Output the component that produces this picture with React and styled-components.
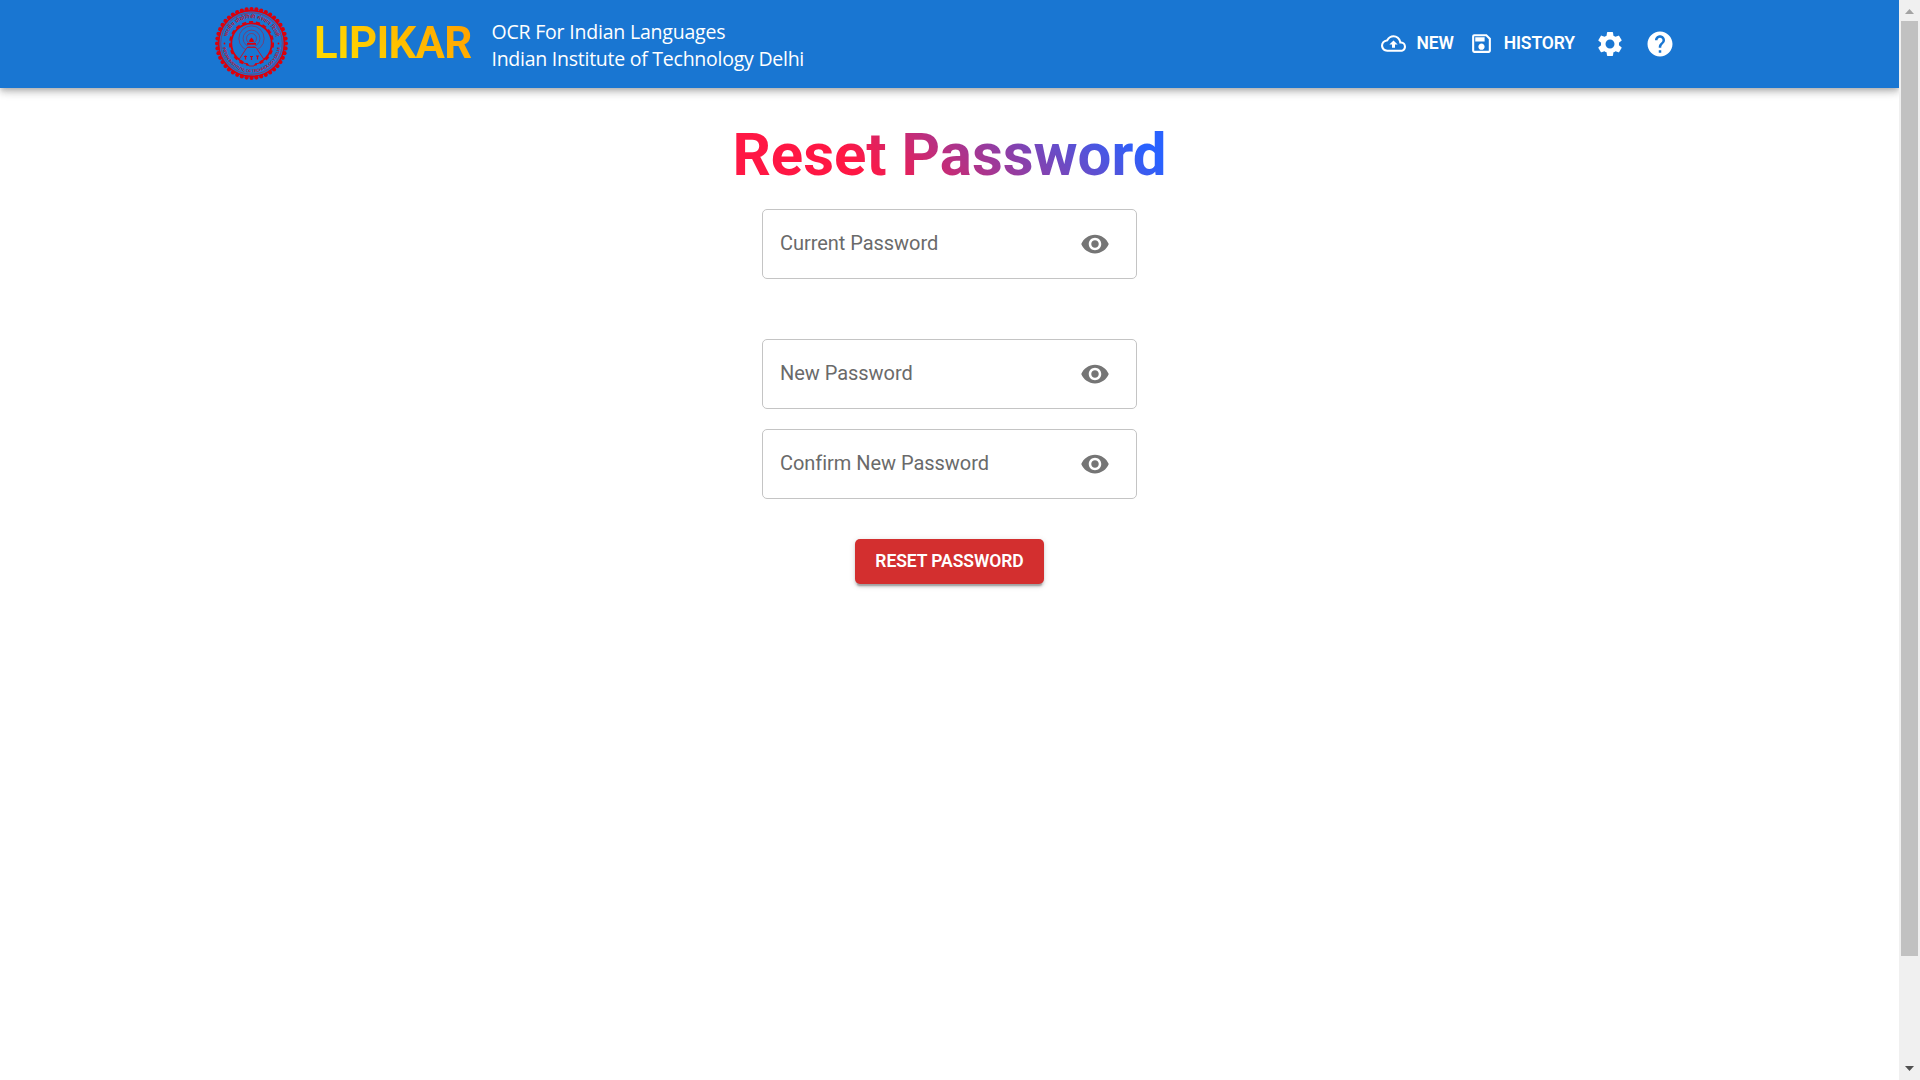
import React from "react";
import styled, { createGlobalStyle, css } from "styled-components";
import { MdOutlineBackup, MdOutlineSave, MdSettings, MdHelp, MdVisibility } from "react-icons/md";

const GlobalStyle = createGlobalStyle`
  * { box-sizing: border-box; }
  html, body { margin: 0; background: #fff; overflow: hidden; }
  body { font-family: Roboto, sans-serif; }
`;

const Screen = styled.div`
  display: flex;
  width: 100vw;
  height: 100vh;
  overflow: hidden;
`;

const Page = styled.div`
  flex: 1;
  display: flex;
  flex-direction: column;
  min-width: 0;
  overflow: hidden;
`;

const Header = styled.header`
  display: flex;
  align-items: center;
  height: 88px;
  flex-shrink: 0;
  padding: 0 224px 0 214px;
  background: #1976d2;
  color: #fff;
  box-shadow: 0 2.5px 5px -1.25px rgba(0, 0, 0, 0.2), 0 5px 6.25px rgba(0, 0, 0, 0.14),
    0 1.25px 12.5px rgba(0, 0, 0, 0.12);
`;

const Emblem = styled.svg`
  width: 75px;
  height: 75px;
  flex-shrink: 0;
  margin-bottom: 1px;
`;

const Brand = styled.div`
  margin-left: 25px;
  font-size: 43.75px;
  line-height: 54px;
  font-weight: 700;
  letter-spacing: -0.75px;
  margin-bottom: 2px;
  background: linear-gradient(45deg, #ffd700 20%, #ffa500 90%);
  -webkit-background-clip: text;
  background-clip: text;
  color: transparent;
`;

const Tagline = styled.div`
  margin: 2px 0 0 20px;
  font-family: "Open Sans", "Noto Sans", sans-serif;
  font-size: 19.5px;
  line-height: 27px;
  white-space: nowrap;
`;

const TagLineRow = styled.div`
  letter-spacing: ${(p) => p.$spacing};
`;

const Nav = styled.nav`
  display: flex;
  align-items: center;
  margin-left: auto;
`;

const NavLink = styled.a`
  display: flex;
  align-items: center;
  gap: 10px;
  margin-right: ${(p) => p.$gap}px;
  padding-bottom: 1px;
  font-size: 17.5px;
  line-height: 30px;
  font-weight: 600;
  letter-spacing: -0.12px;
  svg { font-size: 25px; }
`;

const NavText = styled.span`
  padding-bottom: 2px;
`;

const NavIcon = styled.a`
  display: flex;
  margin-left: ${(p) => p.$gap}px;
  font-size: 30px;
`;

const Main = styled.main`
  display: flex;
  flex-direction: column;
  align-items: center;
  padding-top: 31px;
`;

const Title = styled.h1`
  margin: 0 0 18px;
  font-size: 60px;
  line-height: 72px;
  font-weight: 700;
  letter-spacing: -0.02px;
  background: linear-gradient(45deg, #ff1744 30%, #2962ff 90%);
  -webkit-background-clip: text;
  background-clip: text;
  color: transparent;
`;

const Field = styled.div`
  display: flex;
  align-items: center;
  justify-content: space-between;
  width: 375px;
  height: 70px;
  margin-bottom: ${(p) => p.$after}px;
  padding: 0 26px 0 17px;
  border: 1px solid #c4c4c4;
  border-radius: 5px;
  color: #6a6a6a;
  font-size: 20px;
  letter-spacing: -0.04px;
  svg { font-size: 30px; color: #757575; }
`;

const Label = styled.span`
  padding-bottom: 2px;
`;

const Button = styled.button`
  height: 45px;
  width: 189px;
  padding: 0 0 2px;
  border: 0;
  border-radius: 5px;
  background: #d32f2f;
  color: #fff;
  font: 600 17.5px/30px Roboto, sans-serif;
  letter-spacing: -0.07px;
  box-shadow: 0 3.75px 1.25px -2.5px rgba(0, 0, 0, 0.2), 0 2.5px 2.5px rgba(0, 0, 0, 0.14),
    0 1.25px 6.25px rgba(0, 0, 0, 0.12);
`;

const Scrollbar = styled.div`
  display: flex;
  flex-direction: column;
  align-items: center;
  width: 21px;
  height: 100%;
  background: #f0f0f0;
`;

const arrow = css`
  width: 9px;
  height: 5px;
  flex-shrink: 0;
`;

const ArrowUp = styled.div`
  ${arrow}
  margin: 9px 0 7px;
  background: #a3a3a3;
  clip-path: polygon(50% 0, 100% 100%, 0 100%);
`;

const ArrowDown = styled.div`
  ${arrow}
  margin: auto 0 9px;
  background: #505050;
  clip-path: polygon(0 0, 100% 0, 50% 100%);
`;

const Thumb = styled.div`
  width: 17px;
  height: 935px;
  background: #c1c1c1;
`;

const RED = "#d9000d";
const ring = (count, radius) =>
  Array.from({ length: count }, (_, i) => {
    const a = (i / count) * Math.PI * 2;
    return [radius * Math.cos(a), radius * Math.sin(a)];
  });

function Logo() {
  return (
    <Emblem viewBox="-37.5 -37.5 75 75">
      <defs>
        <path id="top" d="M-25.2 0A25.2 25.2 0 0 1 25.2 0" />
        <path id="bottom" d="M-29 0A29 29 0 0 0 29 0" />
      </defs>
      <g fill={RED}>
        {ring(44, 34.4).map(([x, y], i) => <circle key={i} cx={x} cy={y} r="2.1" />)}
      </g>
      <g fill="none" stroke={RED}>
        <circle r="32.9" strokeWidth="1.6" />
        <circle r="20.2" strokeWidth="1.8" />
        <circle r="21.6" strokeWidth="1.8" strokeDasharray="4.2 2.84" />
        <g strokeWidth="0.6" strokeOpacity="0.75">
          <circle r="30.8" />
          <circle cy="-5" r="12.6" />
          <circle cy="-5" r="8.4" />
          <circle cy="-5" r="5" />
        </g>
      </g>
      <path d="M-4.5 4L-12.5 16L-9 17.5L-7 20L-4 20L-2.5 22.5L2.5 22.5L4 20L7 20L9 17.5L12.5 16L4.5 4Z" fill="#1976d2" stroke={RED} strokeWidth="0.8" />
      <path d="M-4.5-0.5H4.5V1.2H-4.5ZM-2.2-1.4Q-2.8-3.8 0-6Q2.8-3.8 2.2-1.4Z" fill={RED} />
      <g stroke={RED} strokeWidth="1.2" fill="none">
        <path d="M-6 12v4M-7.5 13h3M-1.5 13h3M0 12.5v4M4.5 12.5h3M6 12v4" />
      </g>
      <g fill={RED}>
        <circle cx="-27" r="0.9" />
        <circle cx="27" r="0.9" />
      </g>
      <g fill={RED} fillOpacity="0.85" textAnchor="middle">
        <text fontSize="5.2" fontWeight="600" fontFamily="Noto Sans, sans-serif">
          <textPath href="#top" startOffset="50%" textLength="66">भारतीय प्रौद्योगिकी संस्थान दिल्ली</textPath>
        </text>
        <text fontSize="4.3" fontWeight="700" fontFamily="Liberation Sans, sans-serif">
          <textPath href="#bottom" startOffset="50%" textLength="83">INDIAN INSTITUTE OF TECHNOLOGY DELHI</textPath>
        </text>
      </g>
    </Emblem>
  );
}

const fields = [
  { label: "Current Password", after: 60 },
  { label: "New Password", after: 20 },
  { label: "Confirm New Password", after: 40 },
];

export default function App() {
  return (
    <Screen>
      <GlobalStyle />
      <Page>
        <Header>
          <Logo />
          <Brand>LIPIKAR</Brand>
          <Tagline>
            <TagLineRow $spacing="-0.2px">OCR For Indian Languages</TagLineRow>
            <TagLineRow $spacing="-0.25px">Indian Institute of Technology Delhi</TagLineRow>
          </Tagline>
          <Nav>
            <NavLink $gap={15}><MdOutlineBackup /><NavText>NEW</NavText></NavLink>
            <NavLink $gap={0}><MdOutlineSave /><NavText>HISTORY</NavText></NavLink>
            <NavIcon $gap={20}><MdSettings /></NavIcon>
            <NavIcon $gap={20}><MdHelp /></NavIcon>
          </Nav>
        </Header>
        <Main>
          <Title>Reset Password</Title>
          {fields.map((f) => (
            <Field key={f.label} $after={f.after}>
              <Label>{f.label}</Label>
              <MdVisibility />
            </Field>
          ))}
          <Button>RESET PASSWORD</Button>
        </Main>
      </Page>
      <Scrollbar>
        <ArrowUp />
        <Thumb />
        <ArrowDown />
      </Scrollbar>
    </Screen>
  );
}
